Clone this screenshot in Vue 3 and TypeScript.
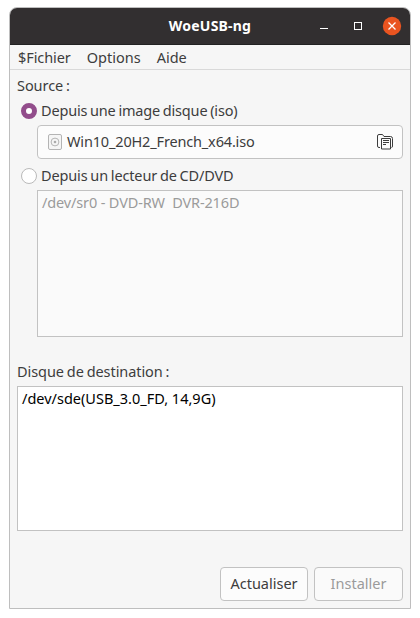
<script setup lang="ts">
import { ref } from 'vue'

const source = ref<'iso' | 'dvd'>('iso')
const isoFile = 'Win10_20H2_French_x64.iso'
const drives: string[] = ['/dev/sr0 - DVD-RW\u00a0 DVR-216D']
const targets: string[] = ['/dev/sde(USB_3.0_FD, 14,9G)']
</script>

<template>
  <div class="desktop">
    <main class="window">
      <header class="titlebar">
        <h1 class="title"><span class="t t-title">WoeUSB-ng</span></h1>
        <div class="controls">
          <svg width="8" height="8" viewBox="0 0 8 8"><path d="M0 6.5h8" stroke="#fff" /></svg>
          <svg width="8" height="8" viewBox="0 0 8 8"><rect x=".5" y=".5" width="7" height="7" fill="none" stroke="#fff" /></svg>
          <svg class="close" width="20" height="20" viewBox="0 0 20 20">
            <circle cx="10" cy="10" r="9.2" fill="#e95420" />
            <path d="M6.5 6.5l7 7M13.5 6.5l-7 7" stroke="#fff" stroke-width="1.3" />
          </svg>
        </div>
      </header>
      <nav class="menu">
        <span class="t t-file">$Fichier</span>
        <span class="t t-options">Options</span>
        <span class="t t-help">Aide</span>
      </nav>
      <section class="content">
        <div class="label"><span class="t t-source">Source :</span></div>
        <div class="radio iso" @click="source = 'iso'">
          <i class="dot" :class="{ on: source === 'iso' }"></i>
          <span class="t t-iso">Depuis une image disque (iso)</span>
        </div>
        <div class="picker">
          <svg width="14" height="16" viewBox="0 0 14 16" fill="none" stroke="#b4b4b4">
            <rect x=".5" y=".5" width="13" height="15" rx="1.5" fill="#f5f5f5" />
            <circle cx="7" cy="8" r="3.9" />
            <circle cx="7" cy="8" r="1.3" fill="#aaa" stroke="none" />
          </svg>
          <span class="t t-name">{{ isoFile }}</span>
          <svg class="browse" width="16" height="16" viewBox="0 0 16 16" fill="none" stroke="#3d3d3d">
            <path d="M3 13.500h-1q-1.500 0-1.500-1.500v-10q0-1.500 1.500-1.500h3.500l1.500 2h6.500q2 0 2 2v7.500q0 1.500-1 1.500" />
            <path d="M4.500 4.500h9v10.500h-9z" />
            <path d="M6 6.500h6M6 8.500h6M6 10.500h3" />
          </svg>
        </div>
        <div class="radio dvd" @click="source = 'dvd'">
          <i class="dot" :class="{ on: source === 'dvd' }"></i>
          <span class="t t-dvd">Depuis un lecteur de CD/DVD</span>
        </div>
        <div class="list drives">
          <div v-for="d in drives" :key="d" class="row"><span class="t t-drive">{{ d }}</span></div>
        </div>
        <div class="label dest"><span class="t t-dest">Disque de destination :</span></div>
        <div class="list targets">
          <div v-for="d in targets" :key="d" class="row"><span class="t t-target">{{ d }}</span></div>
        </div>
        <footer class="actions">
          <button class="refresh"><span class="t t-refresh">Actualiser</span></button>
          <button class="install" disabled><span class="t t-install">Installer</span></button>
        </footer>
      </section>
    </main>
  </div>
</template>

<style>
body { margin: 0; background: #fff; }
</style>

<style scoped>
* { box-sizing: border-box; }
.desktop { width: 420px; height: 618px; padding: 7px 9px 9px; background: #fff; font: 14.5px/20px "Noto Sans", "Open Sans", sans-serif; color: #3d3d3d; }
.window { width: 402px; height: 602px; border: 1px solid #bebebe; border-radius: 8px 8px 0 0; background: #f6f6f6; overflow: hidden; }
.t { display: inline-block; white-space: pre; }
.t-title { letter-spacing: 0.22px; }
.t-file { letter-spacing: -0.08px; }
.t-source { letter-spacing: -0.06px; word-spacing: -1px; }
.t-iso { letter-spacing: -0.18px; word-spacing: -0.8px; }
.t-name { letter-spacing: -0.16px; }
.t-dvd { letter-spacing: -0.14px; word-spacing: -0.8px; }
.t-drive { letter-spacing: -0.14px; }
.t-dest { letter-spacing: -0.07px; word-spacing: -0.8px; }
.titlebar { height: 37px; display: grid; grid-template-columns: 1fr; align-items: center; background: #322f30; border-bottom: 1px solid #222; color: #fff; }
.title { grid-area: 1 / 1; margin: 0; padding-bottom: 1px; text-align: center; font-size: 14px; font-weight: 700; line-height: 20px; }
.controls { grid-area: 1 / 1; justify-self: end; display: flex; align-items: center; gap: 26px; padding-right: 8px; }
.controls .close { margin-left: -6px; }
.menu { height: 25px; display: flex; align-items: center; gap: 16px; padding-left: 8px; border-bottom: 1px solid #d9d9d9; }
.content { display: flex; flex-direction: column; padding: 5px 7px 8px; }
.label { height: 20px; }
.radio { display: flex; align-items: center; gap: 4px; height: 20px; margin-left: 4px; }
.radio .t, .picker .t { margin-bottom: 2px; }
.iso { margin-top: 6px; }
.dvd { margin-top: 7px; }
.dot { width: 16px; height: 16px; border: 1px solid #bababa; border-radius: 50%; background: #fff; }
.dot.on { border: 5px solid #924d8b; }
.picker { display: flex; align-items: center; height: 34px; margin: 4px 0 0 20px; padding: 0 9px 0 10px; border: 1px solid #c2c2c2; border-radius: 4px; background: #fcfcfc; }
.picker .t { margin-left: 5px; }
.browse { margin-left: auto; }
.list { border: 1px solid #c2c2c2; padding: 1px 4px; }
.drives { height: 147px; margin: 4px 0 0 20px; background: #fafafa; color: #9b9b9b; }
.targets { height: 145px; margin-top: 5px; background: #fff; color: #000; }
.dest { margin-top: 24px; }
.row { height: 20px; }
.actions { display: flex; justify-content: flex-end; gap: 6px; margin-top: 36px; }
button { height: 34px; padding: 0 0 2px; border: 1px solid #c2c2c2; border-radius: 4px; background: #fcfcfc; color: #3d3d3d; font: inherit; text-align: center; }
.refresh { width: 88px; }
.install { width: 89px; background: #fafafa; color: #9b9b9b; }
</style>
